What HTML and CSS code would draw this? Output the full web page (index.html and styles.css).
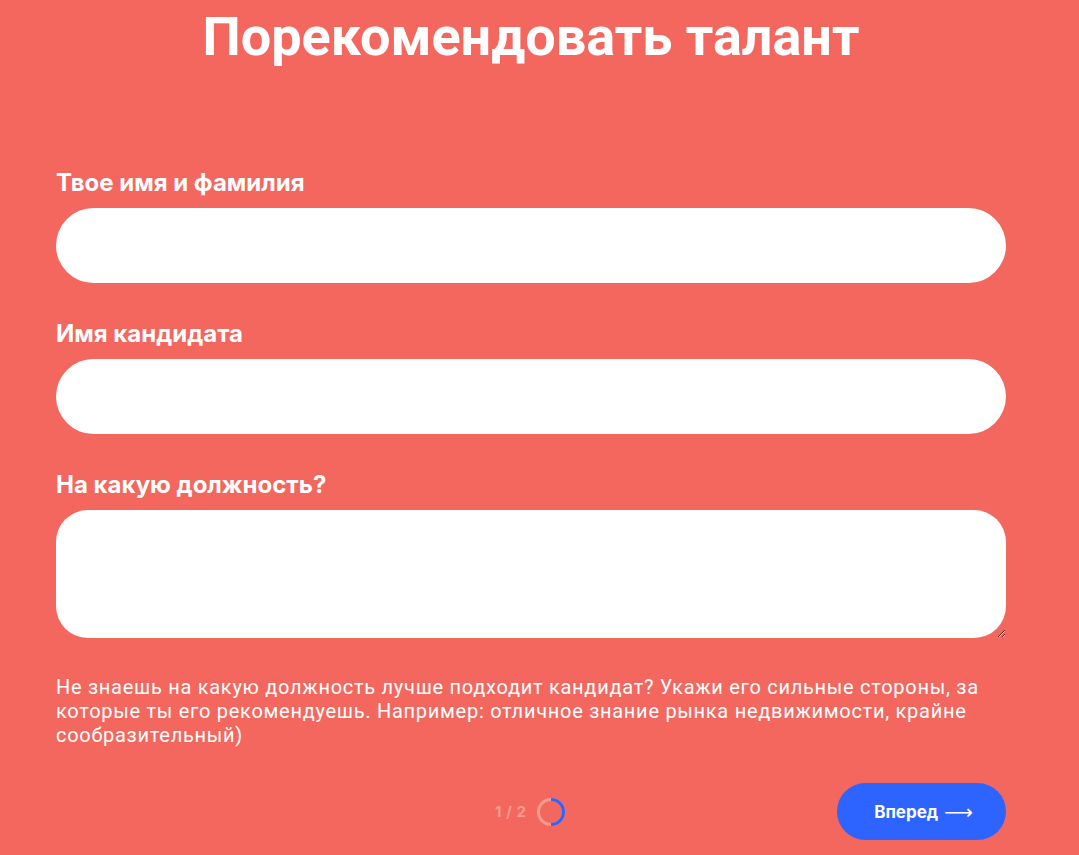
FILE: index.html
```html
<!DOCTYPE html>
<html lang="ru">
	<head>
		<meta charset="utf-8">
		<title>Порекомендовать талант</title>
		<link rel="stylesheet" href="styles.css">
	</head>
	<body>
		<div class="form">
			<h1>Порекомендовать талант</h1>
			<div class="field">
				<label class="label">Твое имя и фамилия</label>
				<input class="input" type="text">
			</div>
			<div class="field">
				<label class="label">Имя кандидата</label>
				<input class="input" type="text">
			</div>
			<div class="field">
				<label class="label">На какую должность?</label>
				<textarea class="input area"></textarea>
			</div>
			<p class="hint">Не знаешь на какую должность лучше подходит кандидат? Укажи его сильные стороны, за которые ты его рекомендуешь. Например: отличное знание рынка недвижимости, крайне сообразительный)</p>
			<div class="footer">
				<div class="steps">
					<span class="count">1 / 2</span>
					<svg class="ring" width="30" height="30" viewBox="0 0 30 30">
						<circle cx="15" cy="15" r="12.5" fill="none" stroke="#f79a92" stroke-width="3"/>
						<path d="M15 2.5 A12.5 12.5 0 0 1 15 27.5" fill="none" stroke="#2d63ff" stroke-width="3"/>
					</svg>
				</div>
				<button class="next">Вперед <span class="arrow">⟶</span></button>
			</div>
		</div>
	</body>
</html>
```

FILE: styles.css
```css
html {
	background: #f4675e;
}

body {
	margin: 0;
	background: #f4675e;
	font-family: 'Inter', 'Roboto', sans-serif;
	color: white;
}

.form {
	width: 950px;
	margin-left: 56px;
	display: flex;
	flex-direction: column;
}

h1 {
	font-family: 'Roboto', sans-serif;
	font-weight: 700;
	font-size: 54px;
	line-height: 66px;
	text-align: center;
	margin: 4px 0 99px 0;
}

.field {
	display: flex;
	flex-direction: column;
	margin-bottom: 37px;
}

.label {
	font-weight: 700;
	font-size: 24px;
	line-height: 28px;
	margin-bottom: 11px;
}

.input {
	height: 75px;
	border: none;
	border-radius: 38px;
	background: white;
	outline: none;
	padding: 0 30px;
	box-sizing: border-box;
	font-family: inherit;
	font-size: 18px;
}

.input.area {
	height: 128px;
	border-radius: 32px;
	padding: 20px 30px;
	resize: vertical;
}

.hint {
	font-family: 'Roboto', sans-serif;
	font-size: 20px;
	line-height: 24px;
	letter-spacing: 0.72px;
	margin: 0;
}

.footer {
	display: flex;
	align-items: center;
	justify-content: flex-end;
	position: relative;
	margin-top: 36px;
}

.steps {
	position: absolute;
	left: 439px;
	display: flex;
	align-items: center;
	gap: 10px;
}

.count {
	font-family: 'Inter', sans-serif;
	font-weight: 700;
	font-size: 15px;
	letter-spacing: 0.5px;
	color: #f99a93;
}

.ring {
	display: block;
}

.next {
	width: 169px;
	height: 57px;
	border: none;
	border-radius: 29px;
	background: #2d63ff;
	color: white;
	font-family: 'Inter', sans-serif;
	font-weight: 700;
	font-size: 17px;
	cursor: pointer;
	display: flex;
	align-items: center;
	justify-content: center;
	gap: 6px;
	padding-left: 10px;
}

.arrow {
	font-family: 'DejaVu Sans', sans-serif;
	font-weight: 400;
	font-size: 20px;
}
```
